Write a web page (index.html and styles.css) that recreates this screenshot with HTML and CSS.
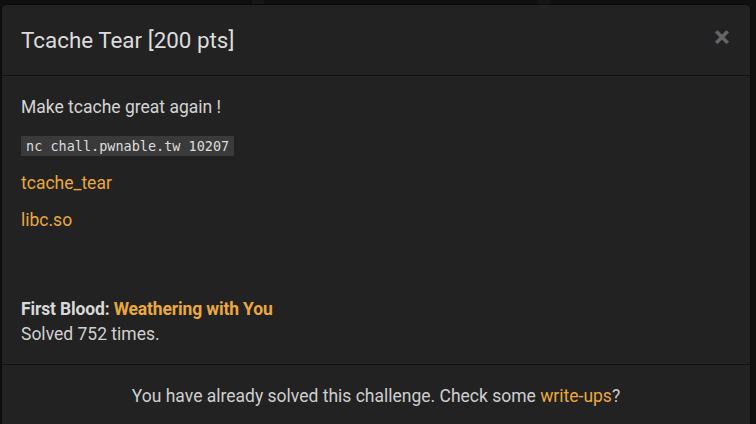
FILE: index.html
```html
<!DOCTYPE html>
<html>
<head>
<meta charset="utf-8">
<link rel="stylesheet" href="styles.css">
</head>
<body>
<div class="backdrop">
  <div class="topbar"><span class="tab t1"></span><span class="tab t2"></span></div>
  <div class="modal">
    <div class="modal-header">
      <h4 class="modal-title">Tcache Tear [200 pts]</h4>
      <span class="close">×</span>
    </div>
    <div class="modal-body">
      <p class="desc">Make tcache great again !</p>
      <p class="code-line"><code>nc chall.pwnable.tw 10207</code></p>
      <p><a href="#">tcache_tear</a></p>
      <p class="last"><a href="#">libc.so</a></p>
      <div class="stats">
        <div><strong>First Blood: <a href="#">Weathering with You</a></strong></div>
        <div>Solved 752 times.</div>
      </div>
    </div>
    <div class="modal-footer">
      You have already solved this challenge. Check some <a href="#">write-ups</a>?
    </div>
  </div>
</div>
</body>
</html>
```
FILE: styles.css
```css
html, body {
  margin: 0;
  padding: 0;
  background: #0f0f0f;
  height: 100%;
  overflow: hidden;
}
body {
  font-family: Roboto, "Liberation Sans", sans-serif;
  color: #d0d0d0;
}
.backdrop {
  position: relative;
  height: 424px;
}
.topbar {
  position: absolute;
  top: 0;
  left: 0;
  right: 0;
  height: 4px;
}
.tab {
  position: absolute;
  top: 0;
  height: 4px;
  background: #161616;
}
.t1 { left: 252px; width: 12px; }
.t2 { left: 538px; width: 12px; }
.modal {
  position: absolute;
  top: 4px;
  left: 1px;
  width: 748px;
  height: 440px;
  background: #222222;
  border: 1px solid #0a0a0a;
  border-radius: 5px;
  display: flex;
  flex-direction: column;
}
.modal-header {
  display: flex;
  align-items: center;
  justify-content: space-between;
  height: 71px;
  padding: 0 19px;
  border-bottom: 1px solid #111111;
  box-sizing: border-box;
}
.modal-title {
  margin: 0;
  font-size: 22.4px;
  font-weight: 400;
  color: #dcdcdc;
}
.close {
  font-size: 30px;
  font-weight: 700;
  color: #666666;
  line-height: 1;
  margin-top: -6px;
  margin-right: 1px;
}
.modal-body {
  padding: 19px 19px 17px;
  font-size: 17.5px;
  line-height: 25px;
  border-bottom: 1px solid #111111;
}
.modal-body p {
  margin: 0 0 12px;
}
.modal-body p.desc { margin-bottom: 11px; }
.modal-body p.code-line {
  height: 30px;
  margin-bottom: 10px;
  display: flex;
  align-items: center;
}
.modal-body p.last { margin-bottom: 0; }
.desc { color: #d4d4d4; }
a {
  color: #eba83e;
  text-decoration: none;
}
code {
  font-family: "DejaVu Sans Mono", "Liberation Mono", monospace;
  font-size: 13.5px;
  line-height: 20px;
  background: #3a3a3a;
  color: #dddddd;
  padding: 0 5px;
}
.stats {
  margin-top: 64px;
}
.stats strong {
  color: #d8d8d8;
  letter-spacing: -0.15px;
}
.modal-footer {
  text-align: center;
  padding: 19px 20px;
  font-size: 17.5px;
  line-height: 25px;
  color: #cfcfcf;
}
```
